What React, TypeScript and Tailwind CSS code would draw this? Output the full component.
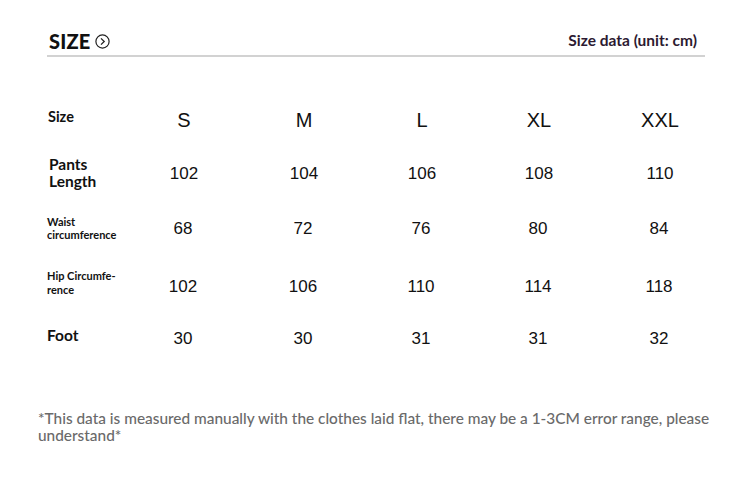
import React from "react";

const cols = [
  { w: "w-[120px]" },
  { w: "w-[120px]" },
  { w: "w-[116px]" },
  { w: "w-[118px]" },
  { w: "w-[124px]" },
];

const rows: { label: React.ReactNode; vals: string[]; cls: string; big?: boolean; lcls: string }[] = [
  {
    label: <span className="block text-[14.5px] font-bold leading-[16px]">Size</span>,
    vals: ["S", "M", "L", "XL", "XXL"],
    cls: "mt-[95px]",
    big: true,
    lcls: "-translate-y-[3px]",
  },
  {
    label: (
      <span className="block text-[15.5px] font-bold leading-[17px] pl-[1px]">
        Pants
        <br />
        Length
      </span>
    ),
    vals: ["102", "104", "106", "108", "110"],
    cls: "mt-[4px]",
    lcls: "-translate-y-[1px]",
  },
  {
    label: (
      <span className="block text-[11px] font-bold leading-[13px]">
        Waist
        <br />
        circumference
      </span>
    ),
    vals: ["68", "72", "76", "80", "84"],
    cls: "mt-[5px]",
    lcls: "-translate-y-[1px] -ml-[1px]",
  },
  {
    label: (
      <span className="block text-[11px] font-bold leading-[14px]">
        Hip Circumfe-
        <br />
        rence
      </span>
    ),
    vals: ["102", "106", "110", "114", "118"],
    cls: "mt-[8px]",
    lcls: "-translate-y-[4px] -ml-[1px]",
  },
  {
    label: <span className="block text-[15.5px] font-bold leading-[17px]">Foot</span>,
    vals: ["30", "30", "31", "31", "32"],
    cls: "mt-[2px]",
    lcls: "-translate-y-[4px] -ml-[1px]",
  },
];

export default function App() {
  return (
    <div className="w-[750px] h-[477px] bg-white relative overflow-hidden">
      <div className="pt-[30px] px-[47px] w-[750px]">
        <div className="w-[658px] flex items-center justify-between h-[22px] pl-[2px] pr-[8px]">
          <div className="flex items-center gap-[4px]">
            <span
              className="text-[20px] font-black text-[#111] tracking-[0.2px]"
              style={{ fontFamily: "Lato, sans-serif" }}
            >
              SIZE
            </span>
            <svg width="15" height="15" viewBox="0 0 15 15" className="mt-[1px]">
              <circle cx="7.5" cy="7.5" r="6.6" fill="none" stroke="#222" strokeWidth="1.2" />
              <path d="M6 4.4 L9.2 7.5 L6 10.6" fill="none" stroke="#222" strokeWidth="1.3" />
            </svg>
          </div>
          <span
            className="text-[15.5px] font-bold text-[#2c1a31]"
            style={{ fontFamily: "Lato, sans-serif" }}
          >
            Size data (unit: cm)
          </span>
        </div>
        <div className="w-[658px] h-[2px] bg-[#d2d2d2] mt-[3px]" />
      </div>

      <div className="absolute top-0 left-0 w-[750px]">
        {rows.map((r, i) => (
          <div key={i} className={`flex items-center h-[50px] ${r.cls}`}>
            <div
              className={`w-[124px] pl-[48px] text-[#111] ${r.lcls}`}
              style={{ fontFamily: "Lato, sans-serif" }}
            >
              {r.label}
            </div>
            {r.vals.map((v, j) => (
              <div
                key={j}
                className={`${cols[j].w} text-center text-[#111] ${r.big ? "text-[20px]" : "text-[17px]"}`}
                style={{ fontFamily: "'Liberation Sans', Arial, sans-serif" }}
              >
                {v}
              </div>
            ))}
          </div>
        ))}
      </div>

      <div
        className="absolute left-[38px] top-[410px] w-[690px] text-[15.4px] font-medium leading-[17px] text-[#6a6a6a]"
        style={{ fontFamily: "Lato, sans-serif" }}
      >
        *This data is measured manually with the clothes laid flat, there may be a 1-3CM error range, please understand*
      </div>
    </div>
  );
}
